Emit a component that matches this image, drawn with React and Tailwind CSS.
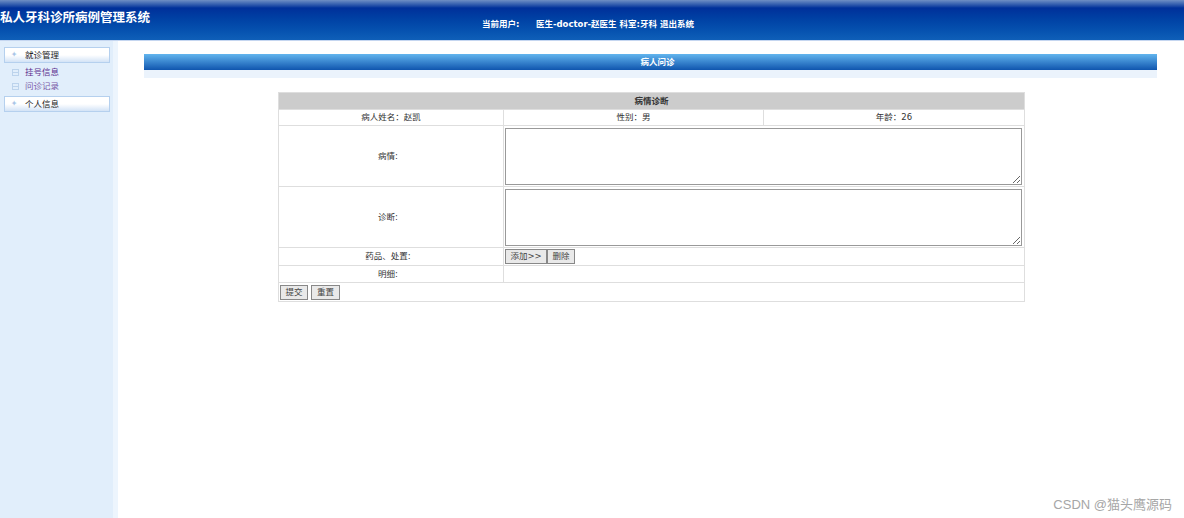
const font = { fontFamily: '"DejaVu Sans", "Noto Sans CJK SC", sans-serif' };

function SideHead({ label }) {
  return (
    <div className="mx-1 flex h-4 w-[106px] items-center border border-[#b5d0ee] bg-gradient-to-b from-white via-white to-[#d3e3f6] text-[8.5px] text-[#222]">
      <span className="ml-[1px] w-4 text-center text-[8px] leading-none text-[#a9c6e8]">✦</span>
      <span className="ml-[3px]">{label}</span>
    </div>
  );
}

function SideLink({ label, color }) {
  return (
    <div className={`flex h-[14px] items-center text-[8.5px] ${color}`}>
      <span className="ml-3 flex h-[7px] w-[7px] items-center border border-[#bcd3ec]">
        <span className="h-px w-full bg-[#bcd3ec]" />
      </span>
      <span className="ml-[6px]">{label}</span>
    </div>
  );
}

function Btn({ children, className = '' }) {
  return (
    <button className={`h-[15px] border border-[#888] bg-[#e9e9e9] text-[8.5px] leading-none text-[#444] ${className}`}>
      {children}
    </button>
  );
}

export default function App() {
  const cell = 'border border-[#dedede] p-0 text-center align-middle';

  return (
    <div className="relative flex h-[518px] w-[1184px] flex-col overflow-hidden bg-white text-[8.5px] text-[#333]" style={font}>
      {/* Header */}
      <div className="flex h-[41px] shrink-0 border-b border-[#c5d6f0] bg-gradient-to-b from-[#6f8fc4] via-[#00309a] to-[#0f5fb8] [--tw-gradient-via-position:20%] text-white">
        <div className="w-[482px] pt-[9px] text-[12.5px] leading-[18px] font-bold whitespace-nowrap">私人牙科诊所病例管理系统</div>
        <div className="flex pt-[18px] text-[8.5px] leading-[12px] font-bold whitespace-nowrap">
          <span className="w-[54px]">当前用户:</span>
          <span>医生-doctor-赵医生 科室:牙科 退出系统</span>
        </div>
      </div>

      <div className="flex min-h-0 flex-1">
        {/* Sidebar */}
        <div className="w-[118px] shrink-0 border-r-[5px] border-[#edf5fd] bg-[#e1eefb] pt-[6px]">
          <SideHead label="就诊管理" />
          <div className="mt-[2px] mb-[3px]">
            <SideLink label="挂号信息" color="text-[#5b2d8e]" />
            <SideLink label="问诊记录" color="text-[#7a5aa8]" />
          </div>
          <SideHead label="个人信息" />
        </div>

        {/* Main */}
        <div className="flex-1 pt-[13px] pl-[26px]">
          <div className="w-[1013px]">
            <div className="flex h-4 items-center justify-center bg-gradient-to-b from-[#62b5ee] to-[#0f55ae] pl-[14px] text-[8.5px] font-bold text-white">
              病人问诊
            </div>
            <div className="h-2 bg-[#ebf3fc]" />
          </div>

          <table className="mt-[14px] ml-[134px] w-[746px] table-fixed border-collapse">
            <colgroup>
              <col className="w-[225px]" />
              <col className="w-[260px]" />
              <col className="w-[261px]" />
            </colgroup>
            <tbody>
              <tr className="h-[17px]">
                <td colSpan={3} className={`${cell} bg-[#cccccc] font-bold text-[#333]`}>病情诊断</td>
              </tr>
              <tr className="h-[16px]">
                <td className={cell}>病人姓名：赵凯</td>
                <td className={cell}>性别：男</td>
                <td className={cell}>年龄：26</td>
              </tr>
              <tr className="h-[61px]">
                <td className={`${cell} pr-[6px]`}>病情:</td>
                <td colSpan={2} className={`${cell} px-[1px] text-left`}>
                  <textarea className="block h-[57px] w-[517px] border border-[#999] bg-white" />
                </td>
              </tr>
              <tr className="h-[61px]">
                <td className={`${cell} pr-[6px]`}>诊断:</td>
                <td colSpan={2} className={`${cell} px-[1px] text-left`}>
                  <textarea className="block h-[57px] w-[517px] border border-[#999] bg-white" />
                </td>
              </tr>
              <tr className="h-[18px]">
                <td className={`${cell} pr-[6px]`}>药品、处置:</td>
                <td colSpan={2} className={`${cell} px-[1px] text-left`}>
                  <div className="flex">
                    <Btn className="w-[42px]">添加&gt;&gt;</Btn>
                    <Btn className="w-[28px]">删除</Btn>
                  </div>
                </td>
              </tr>
              <tr className="h-[17px]">
                <td className={`${cell} pr-[6px]`}>明细:</td>
                <td colSpan={2} className={cell} />
              </tr>
              <tr className="h-[19px]">
                <td colSpan={3} className={`${cell} px-[1px] text-left`}>
                  <div className="flex gap-[3px]">
                    <Btn className="w-[28px]">提交</Btn>
                    <Btn className="w-[29px]">重置</Btn>
                  </div>
                </td>
              </tr>
            </tbody>
          </table>
        </div>
      </div>

      {/* Watermark */}
      <div className="absolute top-[496px] right-[12px] text-[13px] leading-[18px] text-[#a6a6a6]" style={{ fontFamily: '"Liberation Sans", "Noto Sans CJK SC", sans-serif' }}>
        CSDN @猫头鹰源码
      </div>
    </div>
  );
}
